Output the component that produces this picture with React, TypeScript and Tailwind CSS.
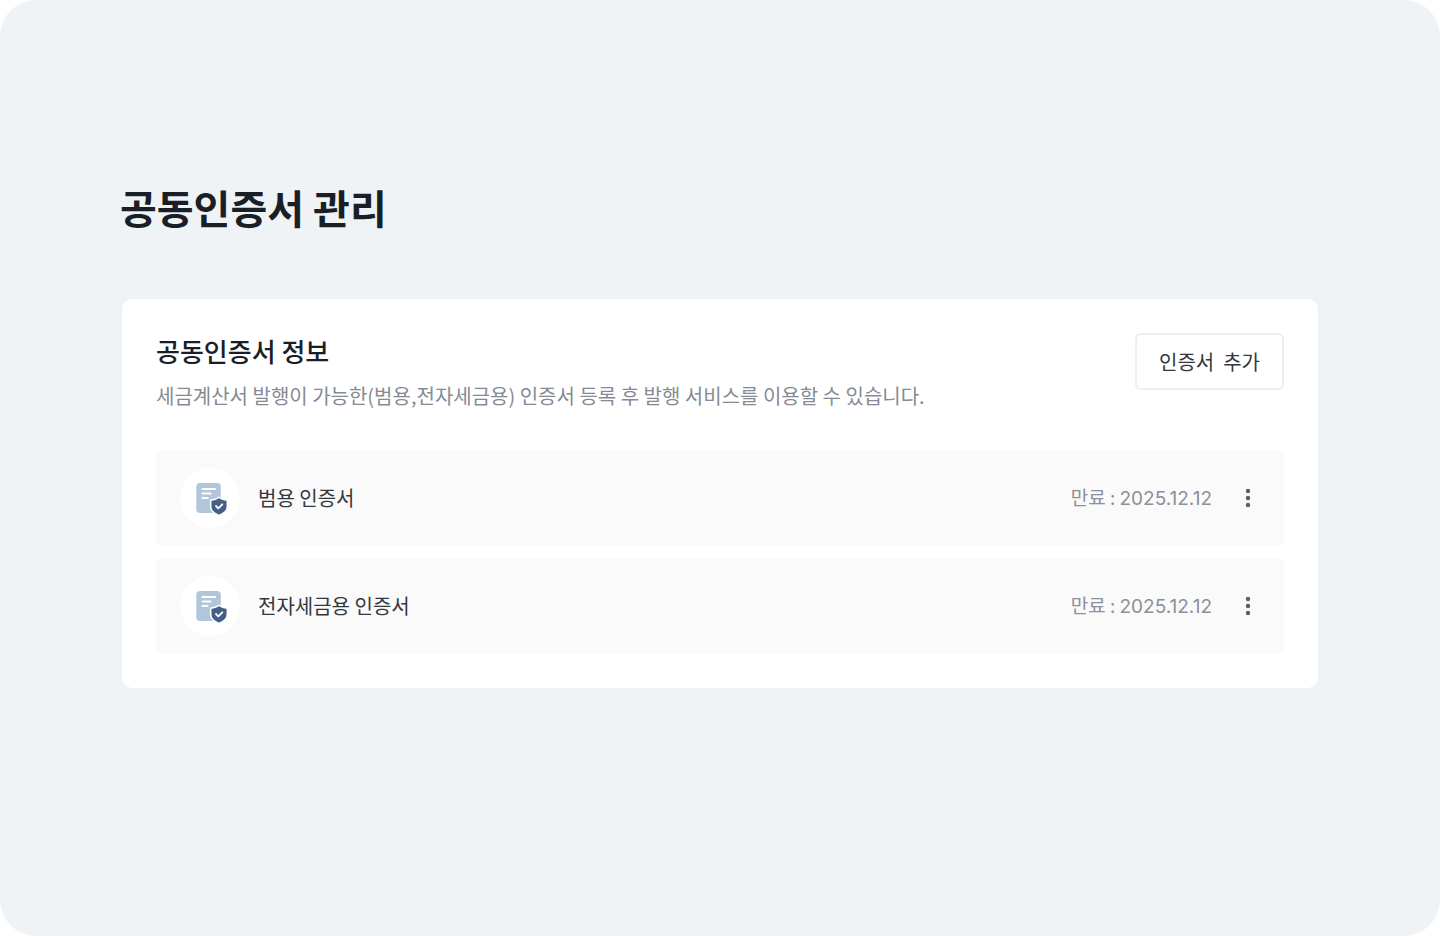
import { useState } from 'react'

interface Certificate {
  id: number; name: string; expires: string
}

const certificates: Certificate[] = [
  { id: 1, name: '범용 인증서', expires: '2025.12.12' },
  { id: 2, name: '전자세금용 인증서', expires: '2025.12.12' },
]

function CertificateIcon() {
  return (
    <svg width="60" height="60" viewBox="0 0 60 60" fill="none" className="shrink-0 rounded-full bg-white" aria-hidden="true">
      <rect x="16.3" y="15" width="24.500" height="30" rx="3.800" fill="#b1c5db" />
      <path d="M22.500 21h12.500M22.500 25.500h8M22.500 30h5" stroke="#fff" strokeWidth="2.200" strokeLinecap="round" />
      <path
        d="M39 29.300c2.200 1.500 4.700 2.400 8.300 2.900v6.300c0 4-3 6.900-8.300 8.900-5.300-2-8.300-4.900-8.300-8.900v-6.300c3.600-.5 6.100-1.400 8.300-2.900Z"
        fill="#465f86" stroke="#fff" strokeWidth="1.500" strokeLinejoin="round"
      />
      <path d="m36 38 2.300 2.300 4-4" stroke="#fff" strokeWidth="1.800" strokeLinecap="round" strokeLinejoin="round" />
    </svg>
  )
}

function MoreIcon() {
  return (
    <svg width="24" height="24" viewBox="0 0 24 24" fill="#5b5f66" aria-hidden="true">
      <circle cx="12" cy="5" r="2.200" />
      <circle cx="12" cy="12" r="2.200" />
      <circle cx="12" cy="19" r="2.200" />
    </svg>
  )
}

export default function CertificatePage() {
  const [items] = useState(certificates)

  return (
    <div className="bg-white font-['Noto_Sans_CJK_KR',sans-serif]">
      <div className="min-h-screen rounded-[36px] bg-[#eff3f6] px-30 pt-[177px]">
        <h1 className="text-[40px] leading-[60px] font-bold text-[#1a1f27]">공동인증서 관리</h1>

        <section className="mt-15 rounded-xl border-2 border-[#eff1f3] bg-white p-[34px]">
          <div className="flex items-start justify-between">
            <div>
              <h2 className="text-[26px] leading-9 font-medium text-[#1a1f27]">공동인증서 정보</h2>
              <p className="mt-[11px] text-xl leading-8 text-[#858b94]">
                세금계산서 발행이 가능한(범용,전자세금용) 인증서 등록 후 발행 서비스를 이용할 수 있습니다.
              </p>
            </div>
            <button type="button" className="h-[57px] shrink-0 rounded-md border-2 border-[#eceef0] bg-white px-[22px] text-xl text-[#33373d]">
              인증서&nbsp; 추가
            </button>
          </div>

          <ul className="mt-[38px] space-y-3">
            {items.map(c => (
              <li key={c.id} className="flex h-24 items-center rounded-md bg-[#fafafa] px-6">
                <CertificateIcon />
                <span className="ml-[18px] text-xl text-[#33373d]">{c.name}</span>
                <span className="ml-auto text-[19px] text-[#8b9099]">
                  만료 : <time className="font-['Inter']">{c.expires}</time>
                </span>
                <button type="button" aria-label={`${c.name} 메뉴`} className="ml-6">
                  <MoreIcon />
                </button>
              </li>
            ))}
          </ul>
        </section>
      </div>
    </div>
  )
}
